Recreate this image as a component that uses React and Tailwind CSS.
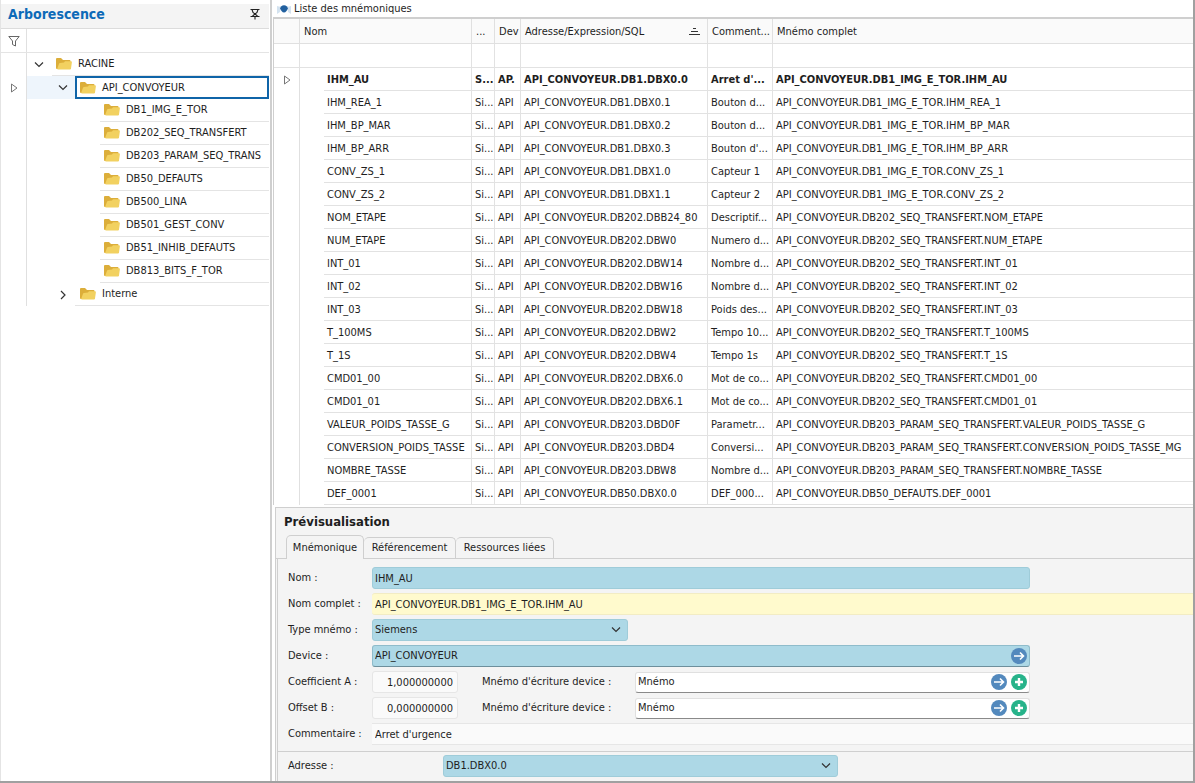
import React from "react";

const FONT = "font-['DejaVu_Sans_Condensed','DejaVu_Sans',sans-serif]";

function Chevron({ right }) {
  return (
    <svg width="10" height="10" viewBox="0 0 10 10" fill="none" stroke="#333" strokeWidth="1.2">
      <path d={right ? "M3 1 L7 5 L3 9" : "M1 2.500 L5 6.500 L9 2.500"} />
    </svg>
  );
}

function Folder() {
  return (
    <svg className="shrink-0" width="16" height="12" viewBox="0 0 16 12">
      <path d="M0 1 Q0 0 1 0 H5 L7 2 H13.500 Q14.500 2 14.500 3 V11 H1 Q0 11 0 10 Z" fill="#dcae3a" />
      <path d="M4 5 L8 4.500 L9 3.200 H15 Q16 3.200 15.900 4.200 L15 10.500 Q14.900 11.500 14 11.500 H2 Q1 11.500 1.300 10.500 L3 5.800 Q3.200 5 4 5 Z" fill="#f2d160" />
    </svg>
  );
}

function RowMarker() {
  return (
    <svg width="8" height="10" viewBox="0 0 8 10" fill="#fff" stroke="#777">
      <path d="M1.500 1 L7 5 L1.500 9 Z" />
    </svg>
  );
}

function GoIcon() {
  return (
    <svg width="16" height="16" viewBox="0 0 16 16">
      <circle cx="8" cy="8" r="8" fill="#5389bd" />
      <path d="M3 8 H12.500 M9 4.500 L12.500 8 L9 11.500" fill="none" stroke="#fff" strokeWidth="1.6" />
    </svg>
  );
}

function AddIcon() {
  return (
    <svg width="16" height="16" viewBox="0 0 16 16">
      <circle cx="8" cy="8" r="8" fill="#27b38a" />
      <path d="M4 8 H12 M8 4 V12" fill="none" stroke="#fff" strokeWidth="2.4" />
    </svg>
  );
}

const leaves = [
  "DB1_IMG_E_TOR",
  "DB202_SEQ_TRANSFERT",
  "DB203_PARAM_SEQ_TRANS",
  "DB50_DEFAUTS",
  "DB500_LINA",
  "DB501_GEST_CONV",
  "DB51_INHIB_DEFAUTS",
  "DB813_BITS_F_TOR",
];

function Tree() {
  return (
    <aside className="w-[270px] shrink-0 border-l border-[#e4e4e4] pt-1 pr-px">
      <header className="flex h-[25px] items-center justify-between border-b border-[#dcdcdc] bg-[#f4f4f4] pr-2 pl-[7px]">
        <h2 className="mb-1 text-[14px] font-bold text-[#0d6ab8]">Arborescence</h2>
        <button aria-label="Épingler" className="mb-1">
          <svg width="12" height="12" viewBox="0 0 12 12" fill="none" stroke="#222" strokeWidth="1.1">
            <path d="M1.500 1.500 H10.500 M3 1.500 L4 4.500 L8.500 8 M9 1.500 L8 4.500 L3.500 8 M1.500 8.500 H10.500 M6 8.500 V11.500" />
          </svg>
        </button>
      </header>
      <div className="flex h-6 border-b border-[#e4e4e4]">
        <div className="flex w-[26px] items-center justify-center border-r border-[#e0e0e0]">
          <svg width="12" height="12" viewBox="0 0 12 12" fill="none" stroke="#666">
            <path d="M0.800 1.500 H11.200 L7.500 6 V11 L4.500 9.500 V6 Z" />
          </svg>
        </div>
      </div>
      <ul>
        <li className="flex h-[23px]">
          <span className="w-[26px] shrink-0 border-r border-[#e0e0e0]" />
          <span className="flex w-[25px] items-center justify-center pr-px"><Chevron /></span>
          <span className="flex flex-1 items-center gap-[6px] border-b border-[#e4e4e4] pl-1"><Folder />RACINE</span>
        </li>
        <li className="flex h-[23px]">
          <span className="flex w-[26px] shrink-0 items-center justify-center border-r border-[#e0e0e0]"><RowMarker /></span>
          <span className="flex w-12 items-center justify-end bg-[#eef5fc] pr-[7px]"><Chevron /></span>
          <span className="flex flex-1 items-center gap-[6px] border-2 border-[#0f64a8] pl-[3px]"><Folder />API_CONVOYEUR</span>
        </li>
        {leaves.map((name) => (
          <li key={name} className="flex h-[23px]">
            <span className="w-[26px] shrink-0 border-r border-[#e0e0e0]" />
            <span className="w-[73px] shrink-0" />
            <span className="flex flex-1 items-center gap-[6px] border-b border-[#e4e4e4] pl-1 whitespace-nowrap"><Folder />{name}</span>
          </li>
        ))}
        <li className="flex h-[23px]">
          <span className="w-[26px] shrink-0 border-r border-[#e0e0e0]" />
          <span className="flex w-12 items-center justify-end pr-[7px]"><Chevron right /></span>
          <span className="flex flex-1 items-center gap-[6px] border-b border-[#e4e4e4] pl-[5px]"><Folder />Interne</span>
        </li>
      </ul>
    </aside>
  );
}

const T1 = "API_CONVOYEUR.DB1_IMG_E_TOR.";
const T2 = "API_CONVOYEUR.DB202_SEQ_TRANSFERT.";
const T3 = "API_CONVOYEUR.DB203_PARAM_SEQ_TRANSFERT.";
const rows = [
  ["IHM_AU", "DB1.DBX0.0", "Arret d'...", T1],
  ["IHM_REA_1", "DB1.DBX0.1", "Bouton d...", T1],
  ["IHM_BP_MAR", "DB1.DBX0.2", "Bouton d...", T1],
  ["IHM_BP_ARR", "DB1.DBX0.3", "Bouton d'...", T1],
  ["CONV_ZS_1", "DB1.DBX1.0", "Capteur 1", T1],
  ["CONV_ZS_2", "DB1.DBX1.1", "Capteur 2", T1],
  ["NOM_ETAPE", "DB202.DBB24_80", "Descriptif...", T2],
  ["NUM_ETAPE", "DB202.DBW0", "Numero d...", T2],
  ["INT_01", "DB202.DBW14", "Nombre d...", T2],
  ["INT_02", "DB202.DBW16", "Nombre d...", T2],
  ["INT_03", "DB202.DBW18", "Poids des...", T2],
  ["T_100MS", "DB202.DBW2", "Tempo 10...", T2],
  ["T_1S", "DB202.DBW4", "Tempo 1s", T2],
  ["CMD01_00", "DB202.DBX6.0", "Mot de co...", T2],
  ["CMD01_01", "DB202.DBX6.1", "Mot de co...", T2],
  ["VALEUR_POIDS_TASSE_G", "DB203.DBD0F", "Parametr...", T3],
  ["CONVERSION_POIDS_TASSE_MG", "DB203.DBD4", "Conversi...", T3, "CONVERSION_POIDS_TASSE"],
  ["NOMBRE_TASSE", "DB203.DBW8", "Nombre d...", T3],
  ["DEF_0001", "DB50.DBX0.0", "DEF_000...", "API_CONVOYEUR.DB50_DEFAUTS."],
];

const TH = "overflow-hidden border-r border-b border-[#e0e0e0] pt-px pl-1 text-left font-normal whitespace-nowrap";
const TD = "overflow-hidden border-r border-b border-[#e2e2e2] pt-[2px] pl-[3px] whitespace-nowrap";
const LAST = "overflow-hidden border-b border-[#e2e2e2] pt-[2px] pl-[3px] whitespace-nowrap";

function MnemonicTable() {
  return (
    <table className="w-full table-fixed border-separate border-spacing-0 border-t-2 border-l border-[#cfcfcf]">
      <colgroup>
        <col className="w-[26px]" />
        <col className="w-6" />
        <col className="w-[148px]" />
        <col className="w-[23px]" />
        <col className="w-[26px]" />
        <col className="w-[187px]" />
        <col className="w-[65px]" />
        <col />
      </colgroup>
      <thead>
        <tr className="h-[25px] bg-[#fafafa]">
          <th className={TH} />
          <th colSpan={2} className={TH}>Nom</th>
          <th className={TH}>...</th>
          <th className={TH}>Dev</th>
          <th className={TH}>
            <div className="flex items-center justify-between pr-[7px]">
              Adresse/Expression/SQL
              <svg width="11" height="8" viewBox="0 0 11 8" stroke="#333"><path d="M4 0.500 H7 M2 3.500 H9 M0 6.500 H11" /></svg>
            </div>
          </th>
          <th className={TH}>Comment...</th>
          <th className="border-b border-[#e0e0e0] pt-px pl-1 text-left font-normal">Mnémo complet</th>
        </tr>
      </thead>
      <tbody>
        <tr className="h-6">
          <td className={TD} />
          <td colSpan={2} className={TD} />
          <td className={TD} />
          <td className={TD} />
          <td className={TD} />
          <td className={TD} />
          <td className={LAST} />
        </tr>
        {rows.map(([name, address, comment, prefix, shown], i) => (
          <tr key={name} className={i === 0 ? "h-[23px] font-bold" : "h-[23px]"}>
            <td className="border-r border-[#e0e0e0] pl-[9px]">{i === 0 && <RowMarker />}</td>
            <td />
            <td className={TD}>{shown || name}</td>
            <td className={TD}>{i === 0 ? "S..." : "Si..."}</td>
            <td className={TD}>{i === 0 ? "AP." : "API"}</td>
            <td className={TD}>API_CONVOYEUR.{address}</td>
            <td className={TD}>{comment}</td>
            <td className={LAST}>{prefix}{name}</td>
          </tr>
        ))}
      </tbody>
    </table>
  );
}

const BLUE = "rounded-[3px] border border-[#9fccd9] bg-[#add8e6]";

function Select({ id, value, className }) {
  return (
    <div className={className}>
      <select id={id} defaultValue={value} className={"h-[22px] w-full appearance-none pl-[2px] " + BLUE}>
        <option>{value}</option>
      </select>
      <span className="pointer-events-none absolute top-[6px] right-[7px]"><Chevron /></span>
    </div>
  );
}

function WriteRow({ id, label, value }) {
  return (
    <div className="flex items-center">
      <label htmlFor={id} className="w-[84px]">{label}</label>
      <input id={id} defaultValue={value} className="h-[22px] w-[86px] rounded-[3px] border border-[#e6e6e6] bg-[#fafafa] pr-1 text-right" />
      <label htmlFor={id + "-w"} className="ml-6 w-[153px]">Mnémo d'écriture device :</label>
      <div className="flex h-[21px] w-[395px] items-center gap-1 rounded-[3px] border border-[#e0e0e0] border-b-[#8a8a8a] bg-white pr-[2px]">
        <input id={id + "-w"} defaultValue="Mnémo" className="min-w-0 flex-1 pl-[2px]" />
        <button type="button" aria-label="Ouvrir"><GoIcon /></button>
        <button type="button" aria-label="Ajouter"><AddIcon /></button>
      </div>
    </div>
  );
}

function Preview() {
  return (
    <section className="mt-[2px] ml-[2px] flex flex-1 flex-col border-t border-l border-[#cfcfcf] bg-[#f4f4f4]">
      <h2 className="flex h-7 items-center pl-2 text-[13px] font-bold">Prévisualisation</h2>
      <div role="tablist" className="flex h-[23px] items-end border-b border-[#cfcfcf] pl-[10px]">
        <button role="tab" aria-selected="true" className="-mb-px h-6 w-[78px] rounded-t-[5px] border border-b-0 border-[#cfcfcf] bg-[#f4f4f4]">Mnémonique</button>
        <button role="tab" aria-selected="false" className="h-[21px] w-[92px] rounded-t-[5px] border border-b-0 border-l-0 border-[#cfcfcf]">Référencement</button>
        <button role="tab" aria-selected="false" className="h-[21px] w-[98px] rounded-t-[5px] border border-b-0 border-l-0 border-[#cfcfcf]">Ressources liées</button>
      </div>
      <div className="ml-px flex-1 border-l border-[#cfcfcf]">
        <form className="flex flex-col gap-1 border-b border-[#cfcfcf] pt-2 pb-[6px] pl-[10px]">
          <div className="flex items-center">
            <label htmlFor="nom" className="w-[84px]">Nom :</label>
            <input id="nom" defaultValue="IHM_AU" className={"h-[22px] w-[658px] pl-[2px] " + BLUE} />
          </div>
          <div className="flex items-center">
            <label htmlFor="complet" className="w-[84px] shrink-0">Nom complet :</label>
            <input id="complet" defaultValue="API_CONVOYEUR.DB1_IMG_E_TOR.IHM_AU" className="h-[22px] min-w-0 flex-1 rounded-l-[3px] border-y border-[#f2ecc4] bg-[#fffacd] pl-[3px]" />
          </div>
          <div className="flex items-center">
            <label htmlFor="type" className="w-[84px]">Type mnémo :</label>
            <Select id="type" value="Siemens" className="relative w-64" />
          </div>
          <div className="flex items-center">
            <label htmlFor="device" className="w-[84px]">Device :</label>
            <div className="flex h-[22px] w-[658px] items-center rounded-[3px] border border-[#8fbccb] border-b-[#6d8f9c] bg-[#add8e6] pr-[2px]">
              <input id="device" defaultValue="API_CONVOYEUR" className="min-w-0 flex-1 pl-[2px]" />
              <button type="button" aria-label="Ouvrir"><GoIcon /></button>
            </div>
          </div>
          <WriteRow id="coef" label="Coefficient A :" value="1,000000000" />
          <WriteRow id="offset" label="Offset B :" value="0,000000000" />
          <div className="flex items-center">
            <label htmlFor="comm" className="w-[84px] shrink-0">Commentaire :</label>
            <input id="comm" defaultValue="Arret d'urgence" className="h-[22px] min-w-0 flex-1 border-y border-[#e6e6e6] bg-[#fafafa] pl-[3px]" />
          </div>
        </form>
        <div className="flex items-center pt-[3px] pb-1 pl-[10px]">
          <label htmlFor="adresse" className="w-[155px]">Adresse :</label>
          <Select id="adresse" value="DB1.DBX0.0" className="relative w-[395px]" />
        </div>
      </div>
    </section>
  );
}

export default function App() {
  return (
    <div className={"flex min-h-screen border-r-2 border-b-2 border-[#a0a0a0] bg-white text-[11px] leading-[14px] text-[#1e1e1e] " + FONT}>
      <Tree />
      <main className="flex min-w-0 flex-1 flex-col border-l-2 border-[#cfcfcf] bg-white pl-px">
        <div className="flex h-[17px] items-center gap-[3px] pl-1">
          <svg width="14" height="10" viewBox="0 0 14 10">
            <path d="M0 2 L4 3 L3 8 L0 10 M14 2 L10 3 L11 8 L14 10" fill="#d3e2ef" />
            <path d="M4 2.500 Q7 0 10 2.500 L11 4.500 L9.500 7 Q7 10 4.500 7 L3 4.500 Z" fill="#22609f" />
          </svg>
          <h1>Liste des mnémoniques</h1>
        </div>
        <MnemonicTable />
        <Preview />
      </main>
    </div>
  );
}
